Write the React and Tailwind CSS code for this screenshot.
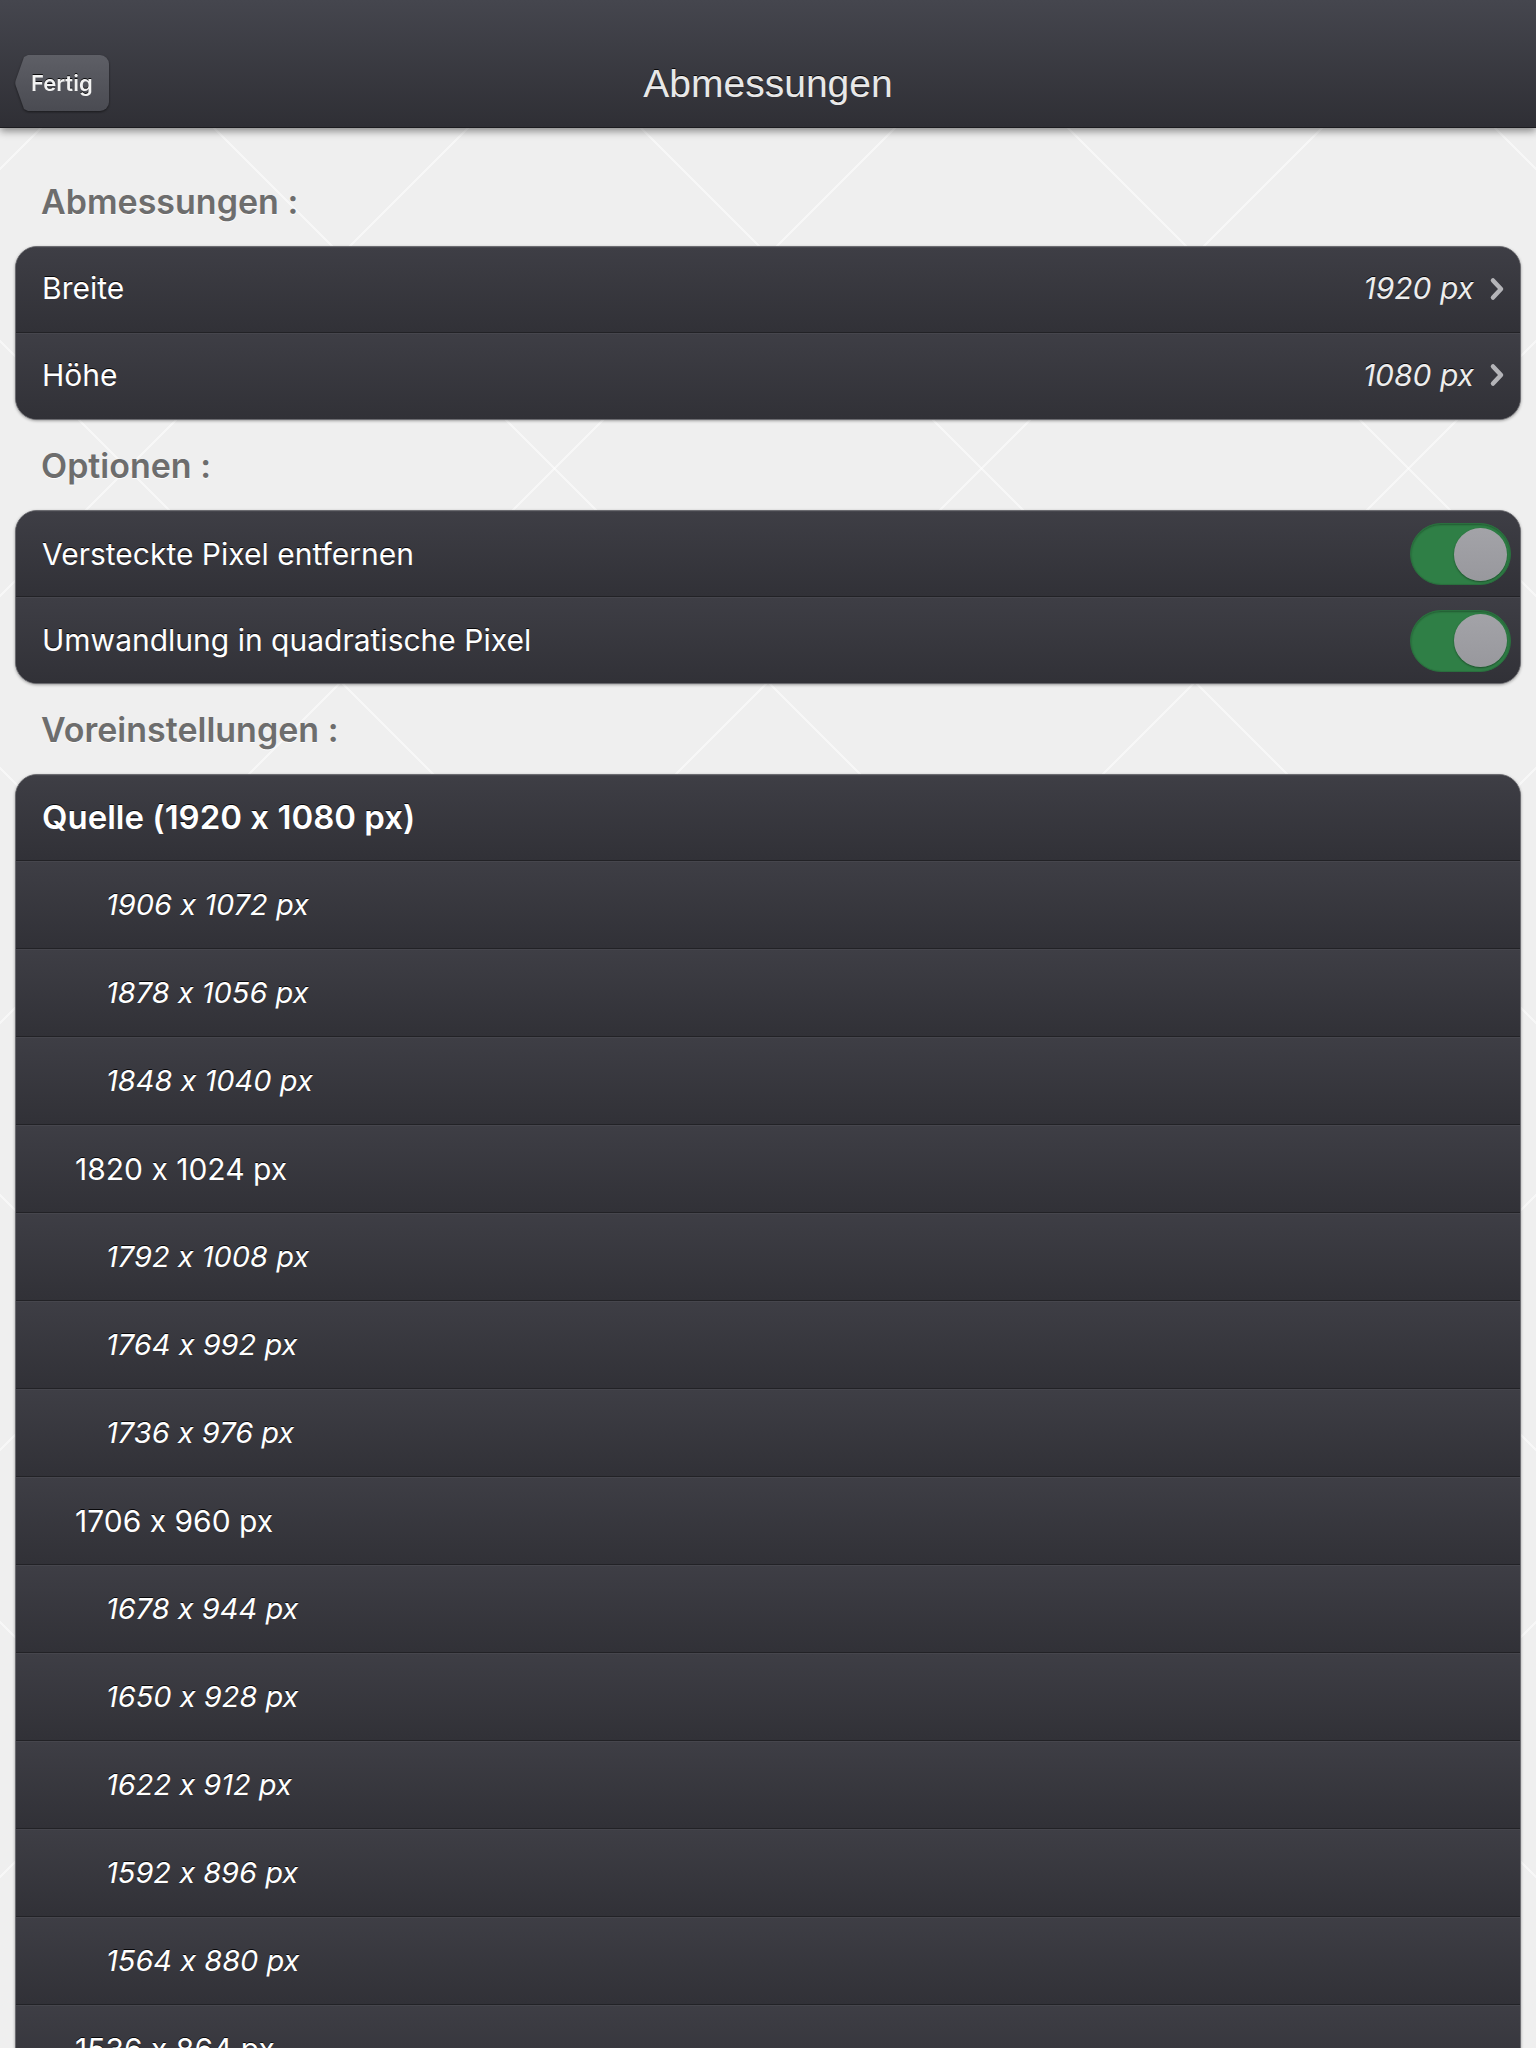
import React from 'react';

const font = "font-['Inter','Noto_Sans',sans-serif] [font-variant-ligatures:no-contextual] [font-feature-settings:'calt'_0]";
const emboss = '[text-shadow:0_-1px_0_rgba(0,0,0,0.85)]';

const presets = [
    { label: '1906 x 1072 px', italic: true },
    { label: '1878 x 1056 px', italic: true },
    { label: '1848 x 1040 px', italic: true },
    { label: '1820 x 1024 px', italic: false },
    { label: '1792 x 1008 px', italic: true },
    { label: '1764 x 992 px', italic: true },
    { label: '1736 x 976 px', italic: true },
    { label: '1706 x 960 px', italic: false },
    { label: '1678 x 944 px', italic: true },
    { label: '1650 x 928 px', italic: true },
    { label: '1622 x 912 px', italic: true },
    { label: '1592 x 896 px', italic: true },
    { label: '1564 x 880 px', italic: true },
    { label: '1536 x 864 px', italic: false },
    { label: '1508 x 848 px', italic: true },
    { label: '1480 x 832 px', italic: true },
];

// Back button with pointed left edge
const BackButton = () => (
    <div className="flex items-stretch h-[56px] drop-shadow-[0_1px_1px_rgba(0,0,0,0.5)]">
        <svg width="13" height="56" viewBox="0 0 13 56" className="block">
            <defs>
                <linearGradient id="bb" x1="0" y1="0" x2="0" y2="1">
                    <stop offset="0" stopColor="#5e5f66" />
                    <stop offset="1" stopColor="#4a4b52" />
                </linearGradient>
            </defs>
            <path d="M13 0 L9 2 L0.5 26 Q0 28 0.5 30 L9 54 L13 56 Z" fill="url(#bb)" />
        </svg>
        <div className={`flex items-center pl-[3px] pr-[16px] rounded-r-[9px] bg-gradient-to-b from-[#5e5f66] to-[#4a4b52] text-[22px] font-semibold text-[#f2f2f2] ${emboss} ${font}`}>
            Fertig
        </div>
    </div>
);

const Header = () => (
    <header className="relative z-10 h-[128px] flex items-end pb-[16px] px-[15px] bg-gradient-to-b from-[#45464e] to-[#2f2f35] border-b border-[#1c1c20] shadow-[0_3px_8px_rgba(0,0,0,0.45)]">
        <BackButton />
        <h1 className={`absolute left-0 right-0 top-[64px] text-center text-[39px] leading-none text-[#e8e8e8] ${emboss} font-['Liberation_Sans',Arial,sans-serif]`}>
            Abmessungen
        </h1>
    </header>
);

const SectionLabel = ({ children }) => (
    <div className={`h-[90px] flex items-center pl-[26px] text-[34px] font-semibold text-[#6d6d6d] [text-shadow:0_1px_0_rgba(255,255,255,0.9)] ${font}`}>
        {children}
    </div>
);

const Card = ({ children }) => (
    <div className="rounded-[22px] overflow-hidden border border-[#6b6b70] bg-[#35353b] shadow-[0_1px_3px_rgba(0,0,0,0.35)]">
        {children}
    </div>
);

const Row = ({ children, last, className = '' }) => (
    <div className={`flex items-center bg-gradient-to-b from-[#3e3e45] to-[#313137] border-t border-[#46464d] ${last ? '' : 'border-b border-b-[#222226]'} ${className}`}>
        {children}
    </div>
);

const Chevron = () => (
    <svg width="18" height="24" viewBox="0 0 18 24" className="ml-[14px]">
        <path d="M5 3.5 L13 12 L5 20.5" fill="none" stroke="#b4b4b8" strokeWidth="4.5" strokeLinecap="round" strokeLinejoin="round" />
    </svg>
);

const Toggle = () => (
    <div className="w-[101px] h-[62px] rounded-full bg-[#2f7f46] border border-[#2a6f3e] flex items-center justify-end pr-[3px] shadow-[inset_0_1px_2px_rgba(0,0,0,0.3)]">
        <div className="w-[53px] h-[53px] rounded-full bg-gradient-to-b from-[#a3a3a8] to-[#98989d] shadow-[0_1px_2px_rgba(0,0,0,0.4)]" />
    </div>
);

const ValueRow = ({ label, value, last }) => (
    <Row last={last} className="h-[86px] pl-[26px] pr-[14px] pb-[3px]">
        <span className={`text-[30px] text-white ${emboss} ${font}`}>{label}</span>
        <span className={`ml-auto text-[30px] italic text-[#ededed] ${emboss} ${font}`}>{value}</span>
        <Chevron />
    </Row>
);

const ToggleRow = ({ label, last }) => (
    <Row last={last} className="h-[86px] pl-[26px] pr-[9px]">
        <span className={`text-[30px] text-white ${emboss} ${font}`}>{label}</span>
        <div className="ml-auto">
            <Toggle />
        </div>
    </Row>
);

export default function App() {
    return (
        <div className="h-[2048px] overflow-hidden bg-[#efefef] [background-image:repeating-linear-gradient(45deg,transparent_0,transparent_300px,rgba(255,255,255,0.5)_300px,rgba(255,255,255,0.5)_302px),repeating-linear-gradient(-45deg,transparent_0,transparent_300px,rgba(255,255,255,0.5)_300px,rgba(255,255,255,0.5)_302px)]">
            <Header />
            <main className="px-[15px] pt-[28px]">
                <SectionLabel>Abmessungen :</SectionLabel>
                <Card>
                    <ValueRow label="Breite" value="1920 px" />
                    <ValueRow label="Höhe" value="1080 px" last />
                </Card>

                <SectionLabel>Optionen :</SectionLabel>
                <Card>
                    <ToggleRow label="Versteckte Pixel entfernen" />
                    <ToggleRow label="Umwandlung in quadratische Pixel" last />
                </Card>

                <SectionLabel>Voreinstellungen :</SectionLabel>
                <Card>
                    <Row className="h-[86px] pl-[26px]">
                        <span className={`text-[33px] font-semibold text-white ${emboss} ${font}`}>
                            Quelle (1920 x 1080 px)
                        </span>
                    </Row>
                    {presets.map((p) => (
                        <Row key={p.label} className={`h-[88px] ${p.italic ? 'pl-[90px]' : 'pl-[59px]'}`}>
                            <span className={`${p.italic ? 'italic text-[29px]' : 'text-[30px]'} text-white ${emboss} ${font}`}>
                                {p.label}
                            </span>
                        </Row>
                    ))}
                </Card>
            </main>
        </div>
    );
}
